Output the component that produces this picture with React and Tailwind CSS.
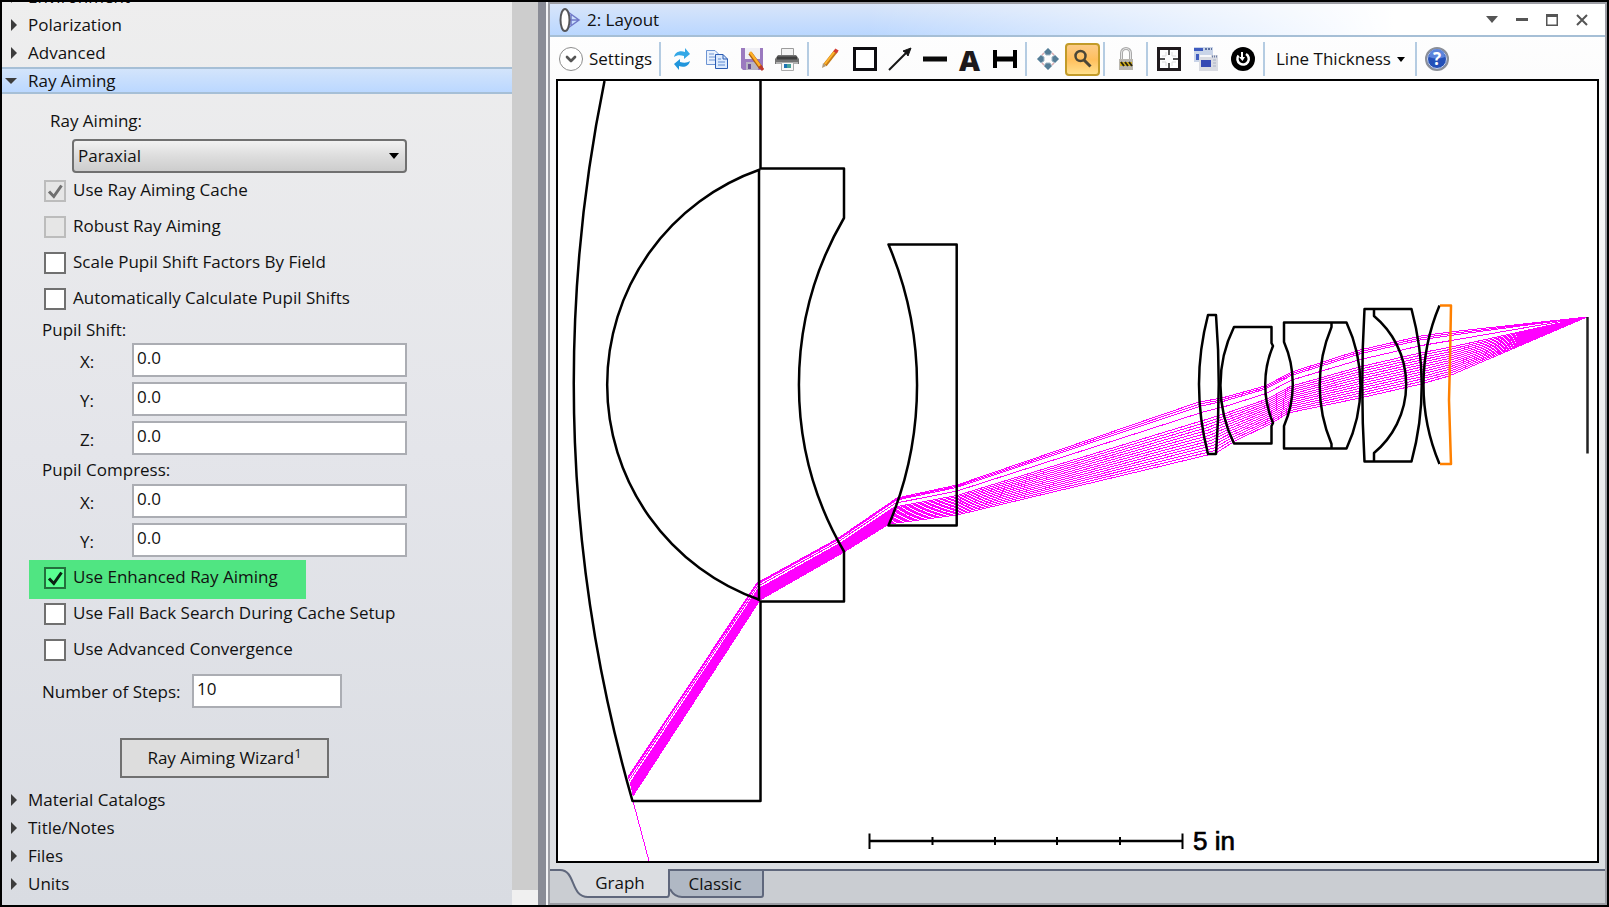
import React from 'react';
import { ChevronDown } from 'lucide-react';

// x/y of the first and last ray at each surface, front to back
const RAY_PATH = [
  [[628, 777], [633, 796]],
  [[757, 583], [760, 600]],
  [[837, 539], [844, 552]],
  [[897, 498], [889, 524]],
  [[957, 485], [957, 515]],
  [[1199, 402], [1216, 453]],
  [[1222, 398], [1235, 441]],
  [[1265, 386], [1272, 423]],
  [[1292, 372], [1288, 413]],
  [[1360, 350], [1360, 398]],
  [[1421, 336], [1421, 384]],
  [[1450, 332], [1449, 376]],
  [[1587, 317], [1587, 317]],
];

const RAYS = [0, 0.04, 0.08, 0.2, 0.35, 0.4, 0.45, 0.5, 0.55, 0.6, 0.65, 0.7, 0.75, 0.8, 0.85, 0.9, 0.95, 1];

const rayPoints = (t) =>
  RAY_PATH.map(([a, b]) => `${a[0] + (b[0] - a[0]) * t},${a[1] + (b[1] - a[1]) * t}`).join(' ');

const TreeRow = ({ label }) => (
  <button className="flex h-7 w-full items-center gap-[11px] pl-[9px] text-left">
    <svg width="6" height="12" viewBox="0 0 6 12" fill="#3c3c3c">
      <path d="M0 0L6 6L0 12Z" />
    </svg>
    <span>{label}</span>
  </button>
);

const CheckRow = ({ id, label, checked = false, disabled = false, highlight = false }) => (
  <label
    htmlFor={id}
    className={
      highlight
        ? 'mt-[3px] -mb-[3px] ml-[27px] flex h-[39px] w-[277px] items-center gap-[7px] bg-[#50e582] pb-[3px] pl-[15px]'
        : 'ml-[42px] flex h-9 items-center gap-[7px]'
    }
  >
    <span className="grid h-[22px] w-[22px]">
      <input
        id={id}
        type="checkbox"
        defaultChecked={checked}
        disabled={disabled}
        className={
          disabled
            ? 'col-start-1 row-start-1 h-[22px] w-[22px] appearance-none border-2 border-[#bcbcbc] bg-[#e6e6e6]'
            : highlight
              ? 'col-start-1 row-start-1 h-[22px] w-[22px] appearance-none border-2 border-[#23703d] bg-[#59ff91]'
              : 'col-start-1 row-start-1 h-[22px] w-[22px] appearance-none border-2 border-[#707070] bg-white'
        }
      />
      {checked && (
        <svg
          viewBox="0 0 22 22"
          className={
            disabled
              ? 'pointer-events-none col-start-1 row-start-1 text-[#707070]'
              : 'pointer-events-none col-start-1 row-start-1 text-[#0b2113]'
          }
        >
          <path d="M5 11.5L9.8 16.5L17.5 5.5" fill="none" stroke="currentColor" strokeWidth="3" />
        </svg>
      )}
    </span>
    <span className="-mt-[2px]">{label}</span>
  </label>
);

const AxisField = ({ id, label }) => (
  <div className="flex h-[34px] items-center">
    <label htmlFor={id} className="w-[52px] pt-1">{label}</label>
    <input
      id={id}
      defaultValue="0.0"
      className="h-[34px] w-[275px] border-2 border-[#abadb3] bg-white px-[3px] pb-[6px] outline-none"
    />
  </div>
);

const Sidebar = () => (
  <aside className="flex w-[536px] shrink-0 bg-linear-to-b from-[#eeeeee] via-[#e4e5ea] to-[#d9dce2]">
    <div className="min-w-0 flex-1 overflow-hidden">
      <div className="-mt-[19px]">
        <TreeRow label="Environment" />
        <TreeRow label="Polarization" />
        <TreeRow label="Advanced" />
        <button className="flex h-[27px] w-full items-center gap-[11px] border-y-2 border-[#a6bfd6] bg-linear-to-b from-[#d3e4fb] to-[#bbd8ff] pl-[3px] text-left">
          <svg width="12" height="6" viewBox="0 0 12 6" fill="#3c3c3c">
            <path d="M0 0H12L6 6Z" />
          </svg>
          <span>Ray Aiming</span>
        </button>

        <form>
          <label htmlFor="mode" className="ml-12 block h-[45px] pt-[13px] leading-7">Ray Aiming:</label>
          <div className="ml-[70px] grid w-[335px] items-center">
            <select
              id="mode"
              className="col-start-1 row-start-1 h-[34px] appearance-none rounded-[4px] border-2 border-[#707070] bg-linear-to-b from-[#f2f2f2] from-0% via-[#dddddd] via-50% to-[#cdcdcd] pl-1 outline-none"
            >
              <option>Paraxial</option>
            </select>
            <svg width="10" height="6" viewBox="0 0 10 6" className="pointer-events-none col-start-1 row-start-1 mr-2 justify-self-end">
              <path d="M0 0H10L5 6Z" />
            </svg>
          </div>

          <CheckRow id="cache" label="Use Ray Aiming Cache" checked disabled />
          <CheckRow id="robust" label="Robust Ray Aiming" disabled />
          <CheckRow id="scale" label="Scale Pupil Shift Factors By Field" />
          <CheckRow id="auto" label="Automatically Calculate Pupil Shifts" />

          <p className="ml-10 h-[26px] leading-[26px]">Pupil Shift:</p>
          <div className="ml-[78px] flex flex-col gap-[5px]">
            <AxisField id="shift-x" label="X:" />
            <AxisField id="shift-y" label="Y:" />
            <AxisField id="shift-z" label="Z:" />
          </div>

          <p className="ml-10 h-[29px] leading-[30px]">Pupil Compress:</p>
          <div className="ml-[78px] flex flex-col gap-[5px]">
            <AxisField id="compress-x" label="X:" />
            <AxisField id="compress-y" label="Y:" />
          </div>

          <CheckRow id="enhanced" label="Use Enhanced Ray Aiming" checked highlight />
          <CheckRow id="fallback" label="Use Fall Back Search During Cache Setup" />
          <CheckRow id="convergence" label="Use Advanced Convergence" />

          <div className="mt-[6px] ml-10 flex h-[34px] items-center">
            <label htmlFor="steps" className="w-[150px] pt-[2px]">Number of Steps:</label>
            <input
              id="steps"
              defaultValue="10"
              className="h-[34px] w-[150px] border-2 border-[#abadb3] bg-white px-[3px] pb-[6px] outline-none"
            />
          </div>

          <button type="button" className="mt-[30px] mb-2 ml-[118px] block h-10 w-[209px] border-2 border-[#707070] bg-[#dddddd]">
            Ray Aiming Wizard<sup className="text-[13px]">1</sup>
          </button>
        </form>

        <TreeRow label="Material Catalogs" />
        <TreeRow label="Title/Notes" />
        <TreeRow label="Files" />
        <TreeRow label="Units" />
      </div>
    </div>
    <div className="flex w-[26px] flex-col bg-[#f0f0f0] pb-[15px]">
      <div className="flex-1 bg-[#cdcdcd]" />
    </div>
  </aside>
);

const Divider = () => <div className="mx-[3px] h-[34px] w-[2px] bg-[#b5cce2]" />;

const Tool = ({ label, active = false, children }) => (
  <button
    aria-label={label}
    className={
      active
        ? 'flex h-[33px] w-[35px] items-center justify-center rounded-[4px] border-2 border-[#c29b29] bg-linear-to-b from-[#fccb86] via-[#ffbf5c] to-[#ffe08c]'
        : 'flex h-[33px] w-[35px] items-center justify-center'
    }
  >
    <svg width="24" height="24" viewBox="0 0 24 24" fill="none">
      {children}
    </svg>
  </button>
);

const Toolbar = () => (
  <div className="flex h-[42px] items-center pt-[2px] pl-[9px]">
    <button className="flex items-center gap-[6px] pr-[3px]">
      <span className="flex h-6 w-6 items-center justify-center rounded-full border border-[#8c8c8c] bg-white">
        <ChevronDown size={16} strokeWidth={4} color="#555555" />
      </span>
      <span className="w-[64px] text-left">Settings</span>
    </button>
    <Divider />
    <Tool label="Refresh">
      <path d="M4 10C5 5 10 3 15 5V1L20 7L14 12V9C10 8 7 8 4 10Z" fill="#35a8e6" />
      <path d="M20 14C19 19 14 21 9 19V23L4 17L10 12V15C14 16 17 16 20 14Z" fill="#2196dc" />
    </Tool>
    <Tool label="Copy">
      <path d="M1.500 3.500H10L13.500 7V17.500H1.500Z" fill="#e9f1fd" stroke="#6d94d3" />
      <path d="M4 7H9M4 10H10M4 13H10" stroke="#6d94d3" />
      <path d="M10.500 7.500H18L22.500 12V21.500H10.500Z" fill="#dceafd" stroke="#2b5cb3" />
      <path d="M18 7.500V12H22.500" stroke="#2b5cb3" />
      <path d="M13 12H16M13 15H20M13 18H20" stroke="#5e8bd4" />
    </Tool>
    <Tool label="Save">
      <path d="M1 1H23V23H3L1 21Z" fill="#9b7abf" />
      <path d="M5 1H20V12H5Z" fill="#f0f0f5" />
      <path d="M6 15H18V23H6Z" fill="#b9b4c4" />
      <path d="M8 17H11V22H8Z" fill="#6d5494" />
      <path d="M10 6L21 21" stroke="#a85d12" strokeWidth="4" />
      <path d="M10 5L20 19" stroke="#ffb028" strokeWidth="2.500" />
      <path d="M20 19L23 23" stroke="#c0392b" strokeWidth="3" />
    </Tool>
    <Tool label="Print">
      <path d="M6.500 1.500H18.500V9H6.500Z" fill="#f3f3f3" stroke="#9c9c9c" />
      <path d="M3 8H21L24 12V17H0V12Z" fill="#737373" />
      <path d="M2 11H22" stroke="#3e3e3e" strokeWidth="3" />
      <path d="M1 16H23" stroke="#b2b2b2" strokeWidth="2" />
      <path d="M6.500 15.500H18.500V23.500H6.500Z" fill="#f7f7f7" stroke="#aaaaaa" />
      <path d="M9 17H12V21H9Z" fill="#1e73b4" />
      <path d="M12 17H16V21H12Z" fill="#49a29a" />
    </Tool>
    <Divider />
    <Tool label="Draw">
      <path d="M7 18L18 4" stroke="#c47a18" strokeWidth="4" />
      <path d="M7 17L17 4" stroke="#ffb42e" strokeWidth="2" />
      <path d="M17 5.500L19 2.500" stroke="#d33d35" strokeWidth="4" />
      <path d="M5 16L8 19L4 21Z" fill="#b09a7a" />
    </Tool>
    <Tool label="Rectangle">
      <path d="M1.500 1.500H22.500V22.500H1.500Z" stroke="#0d0c10" strokeWidth="3" fill="white" />
    </Tool>
    <Tool label="Arrow">
      <path d="M1 23L18 6" stroke="#151515" strokeWidth="2" />
      <path d="M23 1L20 9L18 6L15 4Z" fill="#151515" stroke="#151515" />
    </Tool>
    <Tool label="Line">
      <path d="M0 12H24" stroke="#0a0a0a" strokeWidth="5" />
    </Tool>
    <button aria-label="Text" className="flex h-[33px] w-[35px] items-center justify-center text-[29px] leading-[33px] font-extrabold text-[#1d191b]">
      A
    </button>
    <Tool label="Dimension">
      <path d="M2 3V21M22 3V21" stroke="black" strokeWidth="4" />
      <path d="M2 12H22" stroke="black" strokeWidth="5" />
    </Tool>
    <Divider />
    <Tool label="Pan">
      <g fill="#557d96" stroke="#9fb7c6">
        <path d="M12 1L16 5L14 8H10L8 5Z" />
        <path d="M12 23L16 19L14 16H10L8 19Z" />
        <path d="M1 12L5 8L8 10V14L5 16Z" />
        <path d="M23 12L19 8L16 10V14L19 16Z" />
      </g>
      <path d="M6 8L8 6M16 6L18 8M18 16L16 18M8 18L6 16" stroke="#d9a9ae" strokeWidth="1.500" />
    </Tool>
    <Tool label="Zoom" active>
      <circle cx="9.500" cy="9" r="5" stroke="#4a4637" strokeWidth="2.500" />
      <path d="M13 13L19.500 19.500" stroke="#4a4637" strokeWidth="3" />
    </Tool>
    <Divider />
    <Tool label="Lock">
      <path d="M7.500 13V6C7.500 0 16.500 0 16.500 6V13" stroke="#a9a9a9" strokeWidth="3" />
      <path d="M7.500 13V6C7.500 0 16.500 0 16.500 6V13" stroke="#e6e6e6" />
      <path d="M5 12H19V23H5Z" fill="#b9b6ae" />
      <path d="M6 15H18V19H6Z" fill="#d8b51f" />
      <path d="M7 15L10 19M11 15L14 19M15 15L18 19" stroke="#29240f" strokeWidth="2" />
    </Tool>
    <Divider />
    <div className="flex gap-[2px]">
      <Tool label="Fit">
        <path d="M1.500 1.500H22.500V22.500H1.500Z" stroke="#1f1a1d" strokeWidth="3" fill="white" />
        <path d="M12 3V8M12 16V21M3 12H8M16 12H21" stroke="#555555" strokeWidth="2" />
        <path d="M9 5V9H5M15 5V9H19M9 19V15H5M15 19V15H19" stroke="#dddddd" />
      </Tool>
      <Tool label="Windows">
        <path d="M0 0H19V15H0Z" fill="#c9d4e8" />
        <path d="M0 1H9V4H0Z" fill="#3f5cc0" />
        <path d="M11 2H18" stroke="#5a6f9f" strokeWidth="2" strokeDasharray="2 1" />
        <path d="M2 7H5V13H2Z" fill="#3f5cc0" />
        <path d="M5 8H24V24H5Z" fill="#d9dbe2" />
        <path d="M6 9H17" stroke="#f8f8fb" strokeWidth="2" />
        <path d="M18 9.500H23" stroke="#6c7da5" strokeWidth="2" strokeDasharray="1 1" />
        <path d="M7 13H17V20H7Z" fill="#3449b4" />
        <path d="M19 13H22M19 16H22M19 19H22" stroke="#aab1c4" />
      </Tool>
      <Tool label="Reset">
        <circle cx="12" cy="12" r="12" fill="black" />
        <path d="M7.500 8.500A5.700 5.700 0 1 0 15 7" stroke="white" strokeWidth="2.500" />
        <path d="M11 5V12" stroke="white" strokeWidth="2" />
        <path d="M8 10H14L11.500 14Z" fill="white" />
      </Tool>
    </div>
    <Divider />
    <button className="flex items-center gap-[6px] pr-[7px] pl-[8px] whitespace-nowrap">
      Line Thickness
      <svg width="8" height="5" viewBox="0 0 8 5">
        <path d="M0 0H8L4 5Z" />
      </svg>
    </button>
    <Divider />
    <Tool label="Help">
      <circle cx="12" cy="12" r="11" fill="#2450b8" stroke="#8b8f98" strokeWidth="2" />
      <circle cx="12" cy="12" r="9.500" stroke="#cdd6ea" />
      <path d="M4 10A8 8 0 0 1 20 10Q12 13 4 10Z" fill="#5b84dc" />
      <text x="12" y="18" textAnchor="middle" fontSize="17" fontWeight="700" fontFamily="Open Sans, sans-serif" fill="white">?</text>
    </Tool>
  </div>
);

const LensDrawing = () => (
  <svg viewBox="558 81 1039 780" className="min-h-0 w-full flex-1">
    <g fill="none" stroke="#ff00ff" strokeWidth="1" shapeRendering="crispEdges">
      {RAYS.map((t) => (
        <polyline key={t} points={rayPoints(t)} />
      ))}
      <path d="M633 801L649 861" />
    </g>
    <g fill="none" stroke="black" strokeWidth="2.500" strokeLinejoin="round">
      <path d="M604.500 81A1510 1510 0 0 0 632.500 801H760.500V601" />
      <path d="M760.500 81V169" />
      <path d="M759 169V601" />
      <path d="M760 169.500A228 228 0 0 0 760 600" />
      <path d="M760 168.500H844V218A331 331 0 0 0 844 551.500V601.500H760" />
      <path d="M888.500 244.500H956.700V525.500H888.500A360 360 0 0 0 888.500 244.500Z" />
      <path d="M1208 315H1216Q1221.500 384 1216 454H1208Q1190 384 1208 315Z" />
      <path d="M1234 327H1271.500V343L1273 346A99 99 0 0 0 1273 423L1271.500 426V443.500H1234A132 132 0 0 1 1234 327Z" />
      <path d="M1284 322.500H1346.500A149 149 0 0 1 1346.500 448.500H1284V426A105 105 0 0 0 1284 342Z" />
      <path d="M1331.500 323V327A151 151 0 0 0 1331.500 444V448" />
      <path d="M1364.500 309H1411.500A294 294 0 0 1 1411.500 461.500H1364.500Q1360 385 1364.500 309Z" />
      <path d="M1374 309V316A89 89 0 0 1 1374 453V461" />
      <path d="M1439.500 305.500A204 204 0 0 0 1439.500 464" />
      <path d="M1587.500 317V453.500" stroke="#222222" />
      <path d="M1440 305.500H1451L1450 360L1449 400L1451 464H1440" stroke="#ff8000" />
    </g>
    <g stroke="black" strokeWidth="2">
      <path d="M869.500 841H1182" strokeWidth="2.500" />
      <path d="M869.500 833.500V849M1182.500 833.500V849M932.500 837V845M995 837V845M1057 837V845M1120 837V845" />
    </g>
    <text x="1193" y="850" fontSize="26" fontFamily="Liberation Sans, Arial, sans-serif" stroke="black" strokeWidth="0.700">5 in</text>
  </svg>
);

const LayoutWindow = () => (
  <main className="flex min-w-0 flex-1 flex-col border-2 border-[#9c9da4] bg-linear-to-b from-white via-[#ececee] to-[#dadde1]">
    <header className="flex h-[33px] items-center border-b-2 border-[#a6bfd6] bg-[linear-gradient(to_right,transparent_30%,white_80%),linear-gradient(to_bottom,#d8e5fa,#bad7ff)] pr-[8px] pl-[9px]">
      <svg width="22" height="24" viewBox="0 0 22 24" fill="none">
        <path d="M9 4L20 12L9 20M9 12H20M12 7V17" stroke="#7078c8" strokeWidth="1.500" />
        <ellipse cx="6" cy="12" rx="4.500" ry="11" fill="white" stroke="#55565a" strokeWidth="2" />
      </svg>
      <h1 className="flex-1 pl-[6px]">2: Layout</h1>
      <button aria-label="Window menu" className="flex h-6 w-[30px] items-center justify-center">
        <svg width="12" height="7" viewBox="0 0 12 7" fill="#555555"><path d="M0 0H12L6 7Z" /></svg>
      </button>
      <button aria-label="Minimize" className="flex h-6 w-[30px] items-center justify-center">
        <svg width="12" height="3" viewBox="0 0 12 3" fill="#555555"><path d="M0 0H12V3H0Z" /></svg>
      </button>
      <button aria-label="Maximize" className="flex h-6 w-[30px] items-center justify-center">
        <svg width="12" height="12" viewBox="0 0 12 12" fill="#555555"><path d="M0 0H12V12H0ZM1.500 3V10.500H10.500V3Z" fillRule="evenodd" /></svg>
      </button>
      <button aria-label="Close" className="flex h-6 w-[30px] items-center justify-center">
        <svg width="12" height="12" viewBox="0 0 12 12" stroke="#555555" strokeWidth="2"><path d="M1 1L11 11M11 1L1 11" /></svg>
      </button>
    </header>
    <Toolbar />
    <section className="mx-[6px] mb-[6px] flex min-h-0 flex-1 flex-col border-2 border-black bg-white">
      <LensDrawing />
    </section>
    <nav className="flex h-[34px] border-t-2 border-[#5f677c] bg-[#cacdd2]">
      <button className="-mt-[2px] grid h-[29px] w-[120px] items-center">
        <svg width="120" height="29" viewBox="0 0 120 29" className="col-start-1 row-start-1">
          <path d="M0 0H120V28H38C20 28 26 1 10 1H0Z" fill="#dbdde1" />
          <path d="M0 0H10C26 1 20 29 38 29H0Z" fill="#cacdd2" />
          <path d="M0 1H10C26 1 20 28 38 28H117Q119 28 119 25V0" fill="none" stroke="#5f677c" strokeWidth="2" />
        </svg>
        <span className="col-start-1 row-start-1 pb-[2px] pl-5">Graph</span>
      </button>
      <button className="grid h-[27px] w-[94px] items-center">
        <svg width="94" height="27" viewBox="0 0 94 27" className="col-start-1 row-start-1">
          <path d="M0 0H93V24Q93 26 91 26H12Q4 26 0 18Z" fill="#b0b8c4" />
          <path d="M93 0V24Q93 26 91 26H12Q4 26 0 18" fill="none" stroke="#5f677c" strokeWidth="2" />
        </svg>
        <span className="col-start-1 row-start-1 pr-1 pb-[2px]">Classic</span>
      </button>
    </nav>
  </main>
);

const App = () => (
  <div className="flex h-screen min-h-[907px] border-2 border-black bg-[#f4f4f6] font-['Open_Sans',sans-serif] text-[17px] text-[#111111]">
    <Sidebar />
    <div className="mr-[2px] w-2 shrink-0 bg-[#8a8c96]" />
    <LayoutWindow />
  </div>
);

export default App;
